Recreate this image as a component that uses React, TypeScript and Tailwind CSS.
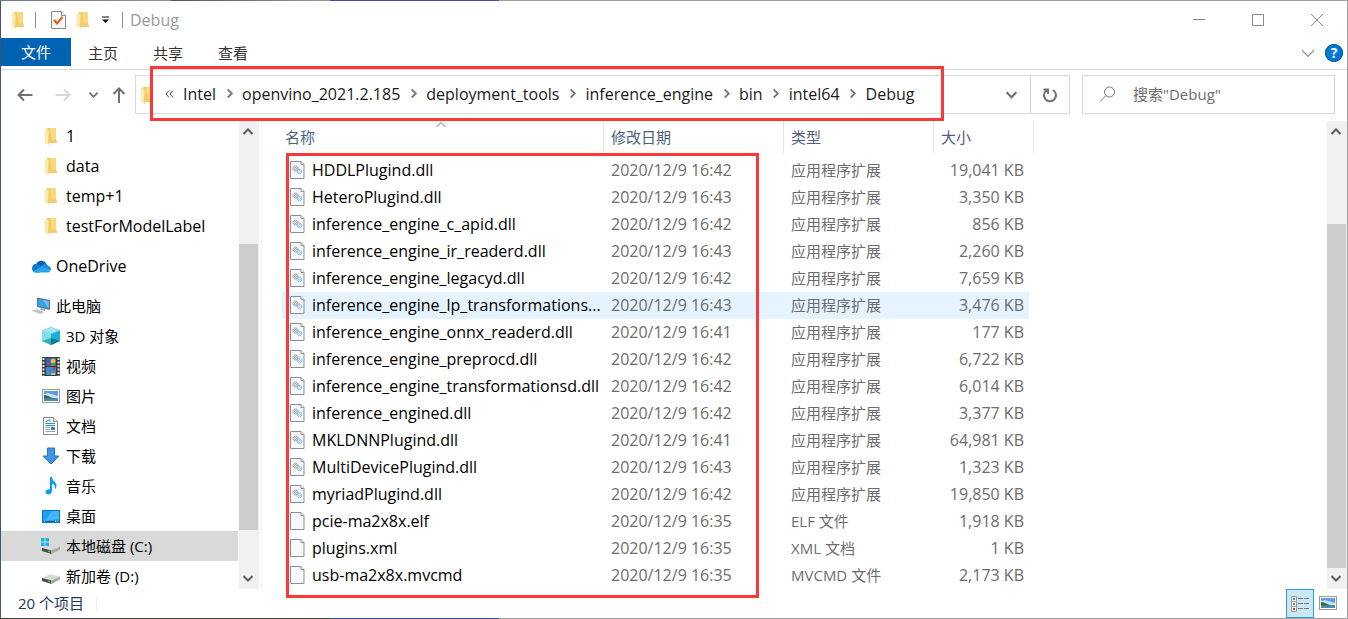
import React from "react";

// One file shown in the list
type FileRow = {
  name: string;
  date: string;
  type: string;
  size: string;
};

type NavItem = {
  label: string;
  icon: React.ReactNode;
  level: number;
  gapBefore?: boolean;
  active?: boolean;
};

const files: FileRow[] = [
  { name: "HDDLPlugind.dll", date: "2020/12/9 16:42", type: "应用程序扩展", size: "19,041 KB" },
  { name: "HeteroPlugind.dll", date: "2020/12/9 16:43", type: "应用程序扩展", size: "3,350 KB" },
  { name: "inference_engine_c_apid.dll", date: "2020/12/9 16:42", type: "应用程序扩展", size: "856 KB" },
  { name: "inference_engine_ir_readerd.dll", date: "2020/12/9 16:43", type: "应用程序扩展", size: "2,260 KB" },
  { name: "inference_engine_legacyd.dll", date: "2020/12/9 16:42", type: "应用程序扩展", size: "7,659 KB" },
  { name: "inference_engine_lp_transformations...", date: "2020/12/9 16:43", type: "应用程序扩展", size: "3,476 KB" },
  { name: "inference_engine_onnx_readerd.dll", date: "2020/12/9 16:41", type: "应用程序扩展", size: "177 KB" },
  { name: "inference_engine_preprocd.dll", date: "2020/12/9 16:42", type: "应用程序扩展", size: "6,722 KB" },
  { name: "inference_engine_transformationsd.dll", date: "2020/12/9 16:42", type: "应用程序扩展", size: "6,014 KB" },
  { name: "inference_engined.dll", date: "2020/12/9 16:42", type: "应用程序扩展", size: "3,377 KB" },
  { name: "MKLDNNPlugind.dll", date: "2020/12/9 16:41", type: "应用程序扩展", size: "64,981 KB" },
  { name: "MultiDevicePlugind.dll", date: "2020/12/9 16:43", type: "应用程序扩展", size: "1,323 KB" },
  { name: "myriadPlugind.dll", date: "2020/12/9 16:42", type: "应用程序扩展", size: "19,850 KB" },
  { name: "pcie-ma2x8x.elf", date: "2020/12/9 16:35", type: "ELF 文件", size: "1,918 KB" },
  { name: "plugins.xml", date: "2020/12/9 16:35", type: "XML 文档", size: "1 KB" },
  { name: "usb-ma2x8x.mvcmd", date: "2020/12/9 16:35", type: "MVCMD 文件", size: "2,173 KB" },
];

const hoveredFile = 5;

const crumbs = ["Intel", "openvino_2021.2.185", "deployment_tools", "inference_engine", "bin", "intel64", "Debug"];

/* ---------- Icons ---------- */

function FolderIcon() {
  return (
    <svg width="12" height="18" viewBox="0 0 12 18" aria-hidden="true">
      <path d="M2 1h9v12l1 1v2H2z" fill="#f3cd68" />
      <path d="M5 1h6v11l-4 1z" fill="#f8d980" />
      <path d="M0 1l3.5 2.5V18L0 15.5z" fill="#fde9a9" />
      <path d="M3.5 3.5L4 17l-.5 1z" fill="#e9bd52" />
    </svg>
  );
}

function CheckDocIcon() {
  return (
    <svg width="15" height="18" viewBox="0 0 15 18" aria-hidden="true">
      <path d="M.5.5h10l4 4v13H.5z" fill="#f7f7f7" stroke="#8a8a8a" />
      <path d="M10.5.5v4h4" fill="#fff" stroke="#8a8a8a" />
      <path d="M3 9l3 3.500L11.500 6" fill="none" stroke="#e8561b" strokeWidth="2" />
    </svg>
  );
}

function OneDriveIcon() {
  return (
    <svg width="20" height="14" viewBox="0 0 20 14" aria-hidden="true">
      <path d="M5 6a5.600 5.600 0 0 1 10.300-1.500L12 8z" fill="#0a5fb4" />
      <path d="M4.500 13.500A4.300 4.300 0 0 1 5 5c2-.3 4 .5 6 2.500L9 13.500z" fill="#0f78d4" />
      <path d="M11 6.500c2-2.500 5-2.500 6 .3 3 .5 3.600 4 2.500 5L13 9z" fill="#1490df" />
      <path d="M2 12.500L11.500 7l7.800 5c-.8 1-1.300 1.500-2.800 1.500H4.500c-1 0-1.800-.4-2.500-1z" fill="#28a8ea" />
    </svg>
  );
}

function ComputerIcon() {
  return (
    <svg width="20" height="18" viewBox="0 0 20 18" aria-hidden="true">
      <path d="M6 .5l13 2.500v10L6 10z" fill="#5b7488" />
      <path d="M7.200 2l10.600 2v7.600L7.200 9.300z" fill="#37a4ea" />
      <path d="M12 3l5.800 1v7.600z" fill="#6cc3f5" />
      <path d="M10 11l4 1v2l-5-1z" fill="#9fabb5" />
      <path d="M0 13.500l5-1.500 9 3-5 2.500z" fill="#d3d8dd" />
      <path d="M3 13.500l8 2.500M5 12.800l7 2.400" stroke="#a9b2ba" strokeWidth=".7" />
    </svg>
  );
}

function CubeIcon() {
  return (
    <svg width="18" height="18" viewBox="0 0 18 18" aria-hidden="true">
      <path d="M0 3.500L9 0l9 3.500L9 7z" fill="#5cc9da" />
      <path d="M1.500 3.500L9 .8l7.500 2.700L9 6.300z" fill="#a4e8f0" />
      <path d="M0 3.500L9 7v11l-9-4z" fill="#7fdfe9" />
      <path d="M18 3.500L9 7v11l9-4z" fill="#1cb0d4" />
      <path d="M0 14l9-3v7z" fill="#35a9bd" />
      <path d="M18 14l-9-3v7z" fill="#0e7893" />
    </svg>
  );
}

function VideoIcon() {
  return (
    <svg width="18" height="19" viewBox="0 0 18 19" aria-hidden="true">
      <rect width="18" height="19" fill="#3a3a3a" />
      <rect x="4" y="1" width="10" height="8" fill="#2f62c8" />
      <rect x="4" y="10" width="10" height="8" fill="#3e8ad8" />
      <path d="M1.500 1v18M16.500 1v18" stroke="#e6e6e6" strokeWidth="2" strokeDasharray="2 1.500" />
      <circle cx="11" cy="4" r="2.500" fill="#f0c22a" />
      <circle cx="6" cy="7" r="1.500" fill="#d83a2c" />
      <path d="M9 7h4v2H9z" fill="#4da544" />
      <path d="M10 10h4l-2 3z" fill="#d83a2c" />
      <path d="M9 16h4v2H9z" fill="#f0c22a" />
    </svg>
  );
}

function PictureIcon() {
  return (
    <svg width="18" height="14" viewBox="0 0 18 14" aria-hidden="true">
      <rect x=".5" y=".5" width="17" height="13" fill="#fff" stroke="#9a9a9a" />
      <rect x="2" y="2" width="14" height="10" fill="#5b9ee8" />
      <path d="M2 5l4-1 10 3v2H2z" fill="#c9e2f5" />
      <path d="M2 6c4 0 6 3 12 3.500L2 10z" fill="#33694f" />
      <path d="M2 9.500h14V12H2z" fill="#4a8fa5" />
    </svg>
  );
}

function DocumentIcon() {
  return (
    <svg width="15" height="18" viewBox="0 0 15 18" aria-hidden="true">
      <path d="M.5.500h10l4 4v13H.5z" fill="#fff" stroke="#8c8c8c" />
      <path d="M10.500.500v4h4" fill="#eee" stroke="#8c8c8c" />
      <path d="M3 5l2-2h2v2M2.500 6.500H12M2.500 8.500H12" fill="none" stroke="#2f8fd0" />
      <path d="M2.500 10.500H7M2.500 12.500H7M2.500 14.500H12" stroke="#8aa9bd" />
      <rect x="8" y="10" width="4" height="3" fill="#3c83c4" />
    </svg>
  );
}

function DownloadIcon() {
  return (
    <svg width="18" height="18" viewBox="0 0 18 18" aria-hidden="true">
      <path d="M5.500 1h7v8h4.500L9 17 1 9h4.500z" fill="#3c95e5" stroke="#2579c4" />
    </svg>
  );
}

function MusicIcon() {
  return (
    <svg width="12" height="18" viewBox="0 0 12 18" aria-hidden="true">
      <path d="M5 0h2c0 4 5 5 4.500 9-.2 1.500-.8 2.500-1.800 3.500C10.500 9 9.500 7.500 7 6.500V14c0 4-6.500 4.500-6.500 1.300C.5 13 3 12 5 12.500z" fill="#0e9cf0" />
    </svg>
  );
}

function DesktopIcon() {
  return (
    <svg width="18" height="13" viewBox="0 0 18 13" aria-hidden="true">
      <rect x=".5" y=".5" width="17" height="12" fill="#1da1f5" stroke="#0b74bd" />
      <path d="M10 1h7v8L3 11z" fill="#46b4f8" />
      <path d="M1 11.500h16" stroke="#0a5f9e" />
      <path d="M2 11.500h1M13 11.500h1M15 11.500h1" stroke="#fff" />
    </svg>
  );
}

function DriveIcon({ system }: { system?: boolean }) {
  return (
    <svg width="19" height="16" viewBox="0 0 19 16" aria-hidden="true">
      <path d="M1 10l9-4 9 2.500-8.500 4z" fill="#d9d9d9" />
      <path d="M1 10l9.500 2.500V16L1 13z" fill="#4a4a4a" />
      <path d="M10.500 12.500l8.500-4v3L10.500 16z" fill="#a9a9a9" />
      <path d="M7 13.200l2 .5" stroke="#45d63c" strokeWidth="1.500" />
      {system && <path d="M0 0h3.500v3.500H0zM4.500 0H8v3.500H4.500zM0 4.500h3.500V8H0zM4.500 4.500H8V8H4.500z" fill="#13b5ea" />}
    </svg>
  );
}

function FileIcon({ gears }: { gears?: boolean }) {
  return (
    <svg width="15" height="18" viewBox="0 0 15 18" aria-hidden="true" className="shrink-0">
      <path d="M.5.500h10.500l3 3v14H.5z" fill="#f6f8f9" stroke="#8b8f92" />
      <path d="M11 .500v3h3" fill="#fff" stroke="#8b8f92" />
      {gears && (
        <>
          <circle cx="5.500" cy="7.500" r="2.500" fill="#e3e6e8" stroke="#858b90" strokeDasharray="1.500 .5" />
          <circle cx="5.500" cy="7.500" r="1" fill="#fff" stroke="#858b90" strokeWidth=".7" />
          <circle cx="9.500" cy="10.500" r="2.300" fill="#d5ebf9" stroke="#79b2d8" strokeDasharray="1.300 .5" />
          <circle cx="9.500" cy="10.500" r=".8" fill="#fff" stroke="#79b2d8" strokeWidth=".6" />
        </>
      )}
    </svg>
  );
}

function Chevron({ dir, size = 12, color = "#5f5f5f", width = 2 }: { dir: "up" | "down" | "right"; size?: number; color?: string; width?: number }) {
  const d = { up: "M1.500 8L6 3.500 10.500 8", down: "M1.500 4L6 8.500 10.500 4", right: "M4 1.500L8.500 6 4 10.500" }[dir];
  return (
    <svg width={size} height={size} viewBox="0 0 12 12" fill="none" stroke={color} strokeWidth={width} aria-hidden="true">
      <path d={d} />
    </svg>
  );
}

function ArrowLeft({ color }: { color: string }) {
  return (
    <svg width="16" height="14" viewBox="0 0 16 14" fill="none" stroke={color} strokeWidth="2" aria-hidden="true">
      <path d="M15.500 7H1.500M7 1.500L1.500 7 7 12.500" />
    </svg>
  );
}

const navItems: NavItem[] = [
  { label: "1", icon: <FolderIcon />, level: 1 },
  { label: "data", icon: <FolderIcon />, level: 1 },
  { label: "temp+1", icon: <FolderIcon />, level: 1 },
  { label: "testForModelLabel", icon: <FolderIcon />, level: 1 },
  { label: "OneDrive", icon: <OneDriveIcon />, level: 0, gapBefore: true },
  { label: "此电脑", icon: <ComputerIcon />, level: 0, gapBefore: true },
  { label: "3D 对象", icon: <CubeIcon />, level: 1 },
  { label: "视频", icon: <VideoIcon />, level: 1 },
  { label: "图片", icon: <PictureIcon />, level: 1 },
  { label: "文档", icon: <DocumentIcon />, level: 1 },
  { label: "下载", icon: <DownloadIcon />, level: 1 },
  { label: "音乐", icon: <MusicIcon />, level: 1 },
  { label: "桌面", icon: <DesktopIcon />, level: 1 },
  { label: "本地磁盘 (C:)", icon: <DriveIcon system />, level: 1, active: true },
  { label: "新加卷 (D:)", icon: <DriveIcon />, level: 1 },
];

// Latin labels are set one pixel larger than Chinese ones
const isLatin = (text: string) => /^[\x20-\x7e]+$/.test(text);

/* ---------- Window parts ---------- */

function TitleBar() {
  return (
    <header className="flex h-[37px] shrink-0 items-center justify-between">
      <div className="flex items-center pl-[11px]">
        <FolderIcon />
        <span className="ml-[11px] h-4 w-px bg-[#8c8c8c]" />
        <button type="button" aria-label="属性" className="ml-[15px]"><CheckDocIcon /></button>
        <button type="button" aria-label="新建文件夹" className="ml-[11px]"><FolderIcon /></button>
        <button type="button" aria-label="自定义快速访问工具栏" className="ml-3">
          <svg width="9" height="8" viewBox="0 0 9 8" aria-hidden="true">
            <path d="M1 1h7" stroke="#111" />
            <path d="M1 3.500h7L4.500 7z" fill="#111" />
          </svg>
        </button>
        <span className="ml-3 h-4 w-px bg-[#8c8c8c]" />
        <h1 className="ml-[7px] text-[16px] text-[#999999]">Debug</h1>
      </div>
      <div className="flex h-full pr-px">
        <button type="button" aria-label="最小化" className="flex w-[59px] items-center justify-center">
          <svg width="12" height="12" stroke="#8a8a8a" aria-hidden="true"><path d="M0 5.500h12" /></svg>
        </button>
        <button type="button" aria-label="最大化" className="flex w-[59px] items-center justify-center">
          <svg width="12" height="12" fill="none" stroke="#8a8a8a" aria-hidden="true"><path d="M.5.500h11v11H.5z" /></svg>
        </button>
        <button type="button" aria-label="关闭" className="flex w-[59px] items-center justify-center">
          <svg width="12" height="12" fill="none" stroke="#8a8a8a" aria-hidden="true"><path d="M0 0l12 12M12 0L0 12" /></svg>
        </button>
      </div>
    </header>
  );
}

function RibbonTabs() {
  return (
    <nav className="flex h-8 shrink-0 items-start justify-between border-b border-[#dadada]">
      <div className="flex">
        <button type="button" className="h-7 w-[70px] bg-[#0063b1] text-white">文件</button>
        {["主页", "共享", "查看"].map((tab) => (
          <button key={tab} type="button" className="h-[30px] w-[65px] pr-px text-[#333333]">{tab}</button>
        ))}
      </div>
      <div className="flex h-[30px] items-center gap-[9px] pr-1">
        <button type="button" aria-label="展开功能区"><Chevron dir="down" size={16} color="#9a9a9a" width={1} /></button>
        <button type="button" aria-label="帮助" className="flex size-[18px] items-center justify-center rounded-full bg-[#0078d7] text-sm font-bold text-white ring-1 ring-inset ring-[#005a9e]">?</button>
      </div>
    </nav>
  );
}

function AddressBar() {
  return (
    <div className="flex shrink-0 gap-3 pt-[5px] pr-3 pb-[7px]">
      <div className="flex flex-1">
        <div className="flex w-[134px] items-center pl-4">
          <button type="button" aria-label="后退"><ArrowLeft color="#707070" /></button>
          <button type="button" aria-label="前进" className="ml-[22px] rotate-180"><ArrowLeft color="#d8d8d8" /></button>
          <button type="button" aria-label="最近浏览的位置" className="ml-[17px]"><Chevron dir="down" size={11} color="#707070" /></button>
          <button type="button" aria-label="上移" className="ml-[13px]">
            <svg width="14" height="16" viewBox="0 0 14 16" fill="none" stroke="#707070" strokeWidth="2" aria-hidden="true">
              <path d="M7 16V1.500M1.500 7L7 1.500 12.500 7" />
            </svg>
          </button>
        </div>
        <div className="relative flex h-[39px] flex-1 items-center border border-[#d9d9d9]">
          <span className="ml-[5px] flex w-[24px]"><FolderIcon /></span>
          <ol className="flex items-center pb-[2px] text-[16px] text-[#1a1a1a]">
            <li className="flex w-[18px]">
              <svg width="9" height="8" viewBox="0 0 9 8" fill="none" stroke="#444" aria-hidden="true">
                <path d="M4 .500L1 4l3 3.500M8 .500L5 4l3 3.500" />
              </svg>
            </li>
            {crumbs.map((crumb, i) => (
              <li key={crumb} className="flex items-center">
                {i > 0 && <span className="flex w-[26px] justify-center"><Chevron dir="right" size={11} color="#777777" /></span>}
                <a href="#">{crumb}</a>
              </li>
            ))}
          </ol>
          <button type="button" aria-label="以前的位置" className="ml-auto flex w-[37px] justify-center"><Chevron dir="down" size={13} color="#707070" /></button>
          <button type="button" aria-label="刷新" className="flex h-full w-[39px] items-center justify-center border-l border-[#d9d9d9]">
            <svg width="16" height="16" viewBox="0 0 16 16" fill="none" stroke="#707070" strokeWidth="2" aria-hidden="true">
              <path d="M11 3a6 6 0 1 1-6 0M1.500 2.500h4.500v4.500" />
            </svg>
          </button>
          {/* Path callout */}
          <div className="pointer-events-none absolute -top-[10px] left-[14px] h-[55px] w-[794px] border-3 border-[#fb3737]" />
        </div>
      </div>
      <label className="flex h-[39px] w-[253px] items-center border border-[#d9d9d9] pl-4">
        <svg width="17" height="17" viewBox="0 0 17 17" fill="none" stroke="#767676" aria-hidden="true">
          <circle cx="10.500" cy="6" r="5" />
          <path d="M7 9.500L1 15.500" />
        </svg>
        <input type="search" aria-label="搜索" placeholder={'搜索"Debug"'} className="ml-[17px] min-w-0 flex-1 pb-[2px] outline-none placeholder:text-[#6d6d6d]" />
      </label>
    </div>
  );
}

// Vertical scroll bar, the three numbers are the flex weights of its track
function ScrollBar({ before, thumb, after }: { before: number; thumb: number; after: number }) {
  return (
    <div className="flex w-5 shrink-0 flex-col bg-[#f0f0f0]">
      <button type="button" aria-label="向上滚动" className="flex h-[21px] items-center justify-center pr-[2px]"><Chevron dir="up" /></button>
      <div className="flex flex-1 flex-col">
        <div style={{ flexGrow: before }} />
        <div className="mr-px bg-[#cdcdcd]" style={{ flexGrow: thumb }} />
        <div style={{ flexGrow: after }} />
      </div>
      <button type="button" aria-label="向下滚动" className="flex h-[21px] items-center justify-center pr-[2px] pb-px"><Chevron dir="down" /></button>
    </div>
  );
}

function Sidebar() {
  return (
    <aside className="flex w-[261px] shrink-0 border-r border-[#f3f3f3]">
      <ul className="mr-px flex-1 overflow-hidden text-black">
        {navItems.map((item) => (
          <li key={item.label} className={item.gapBefore ? "mt-[10px]" : ""}>
            <a href="#" className={`flex h-[30px] items-center ${item.level ? "pl-[39px]" : "pl-[29px]"} ${item.active ? "bg-[#d9d9d9]" : ""}`}>
              <span className="mr-[5px] flex w-[21px] justify-center">{item.icon}</span>
              <span className={isLatin(item.label) ? "text-[16px]" : "text-[15px]"}>{item.label}</span>
            </a>
          </li>
        ))}
      </ul>
      <ScrollBar before={102} thumb={286} after={38} />
      <div className="w-[2px]" />
    </aside>
  );
}

function FileTable() {
  return (
    <main className="min-w-0 flex-1 pl-5">
      <div className="relative w-[752px]">
        <table className="w-full table-fixed border-collapse text-left">
          <colgroup>
            <col className="w-[322px]" />
            <col className="w-[180px]" />
            <col className="w-[150px]" />
            <col className="w-[95px]" />
            <col />
          </colgroup>
          <thead className="text-[#4c607a]">
            <tr className="h-9 align-top">
              <th className="relative p-0 font-normal">
                <span className="absolute inset-x-0 -top-[2px] flex justify-center pr-[5px]"><Chevron dir="up" size={12} color="#777777" width={1} /></span>
                <div className="h-8 border-r border-[#e5e5e5] pl-[3px] leading-8">名称</div>
              </th>
              <th className="p-0 font-normal"><div className="h-8 border-r border-[#e5e5e5] pl-[7px] leading-8">修改日期</div></th>
              <th className="p-0 font-normal"><div className="h-8 border-r border-[#e5e5e5] pl-[7px] leading-8">类型</div></th>
              <th colSpan={2} className="p-0 font-normal"><div className="h-8 border-r border-[#e5e5e5] pl-[7px] leading-8">大小</div></th>
            </tr>
          </thead>
          <tbody className="text-[#6d6d6d]">
            {files.map((file, i) => {
              const bg = i === hoveredFile ? "bg-[#e5f3ff]" : "";
              return (
                <tr key={file.name} className="h-[27px]">
                  <td className={`p-0 pb-[2px] pl-2 ${bg}`}>
                    <div className="flex items-center gap-[7px] text-[16px] whitespace-nowrap text-black">
                      <FileIcon gears={file.name.startsWith("inference") || file.name.endsWith(".dll")} />
                      {file.name}
                    </div>
                  </td>
                  <td className={`p-0 pb-[2px] pl-[7px] text-[16px] ${bg}`}>{file.date}</td>
                  <td className={`p-0 pb-[2px] pl-[7px] ${bg}`}>{file.type}</td>
                  <td className={`p-0 pr-[5px] pb-[2px] text-right text-[16px] whitespace-nowrap ${bg}`}>{file.size}</td>
                  <td className="p-0" />
                </tr>
              );
            })}
          </tbody>
        </table>
        {/* File list callout */}
        <div className="pointer-events-none absolute top-8 left-1 h-[445px] w-[473px] border-3 border-[#fb3737]" />
      </div>
    </main>
  );
}

function StatusBar() {
  return (
    <footer className="flex h-[29px] shrink-0 items-center justify-between pr-[10px]">
      <div className="flex items-center pb-[2px]">
        <span className="pl-[17px] text-[#1e395b]">20 个项目</span>
        <span className="ml-3 h-3 w-px bg-[#ededed]" />
      </div>
      <div className="flex h-full items-center gap-[5px]">
        <button type="button" aria-label="详细信息" className="flex h-full w-7 items-center justify-center border border-[#26a0da] bg-[#cce8f6]">
          <svg width="18" height="16" viewBox="0 0 18 16" aria-hidden="true">
            <path d="M.5.500h5v5h-5zM.5 5.500h5v5h-5zM.5 10.500h5v5h-5z" fill="#fff" stroke="#9a9a9a" />
            <path d="M7 2.500h5M13 2.500h5M7 7.500h5M13 7.500h5M7 12.500h5M13 12.500h5" stroke="#777" />
            <path d="M2 2h2v2H2z" fill="#3c83c4" />
            <path d="M2 7h2v2H2z" fill="#6d8f3c" />
            <path d="M2 12h2v2H2z" fill="#d23b20" />
          </svg>
        </button>
        <button type="button" aria-label="大缩略图" className="pb-px"><PictureIcon /></button>
      </div>
    </footer>
  );
}

export default function App() {
  return (
    <div className="flex h-screen flex-col overflow-hidden bg-white font-['Open_Sans','Noto_Sans_CJK_SC',sans-serif] text-[15px] leading-5">
      <div className="h-px shrink-0 bg-[linear-gradient(to_right,#6a7a8e_0,#96928f_170px,#55525c_172px,#8c8886_290px,#9a9a9a_330px,#5b3fa0_330px,#5b3fa0_499px,#a0a0a0_499px)]" />
      <div className="flex min-h-0 flex-1 flex-col border-r border-l border-r-[#a0a0a0] border-l-[#44546a]">
        <TitleBar />
        <RibbonTabs />
        <AddressBar />
        <div className="flex min-h-0 flex-1">
          <Sidebar />
          <FileTable />
          <ScrollBar before={82} thumb={344} after={0} />
        </div>
        <StatusBar />
      </div>
      <div className="h-px shrink-0 bg-[linear-gradient(to_right,#3a4038_0,#3a4038_330px,#2f4a8c_330px,#2f4a8c_499px,#a0a0a0_499px)]" />
    </div>
  );
}
